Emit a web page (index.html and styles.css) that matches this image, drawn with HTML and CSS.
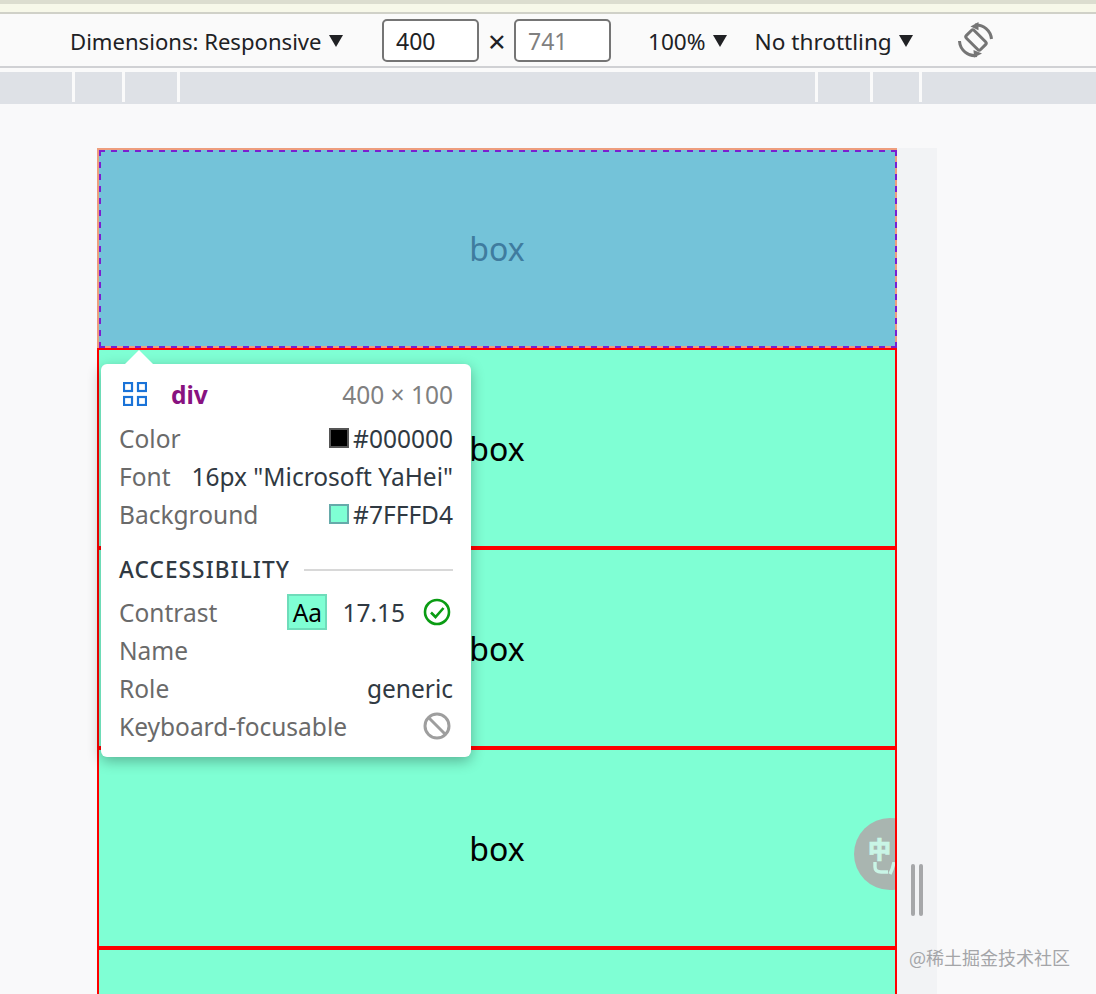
FILE: index.html
```html
<!DOCTYPE html>
<html lang="en">
<head>
<meta charset="utf-8">
<title>Responsive device toolbar</title>
<link rel="stylesheet" href="styles.css">
</head>
<body>
<div class="strip"></div>
<header class="toolbar">
  <span class="tb-label dims">Dimensions: Responsive</span><i class="caret caret-dims"></i>
  <div class="field">400</div>
  <span class="times">×</span>
  <div class="field muted">741</div>
  <span class="tb-label zoom">100%</span><i class="caret caret-zoom"></i>
  <span class="tb-label throttle">No throttling</span><i class="caret caret-throttle"></i>
  <svg class="rotate" width="36" height="38" viewBox="0 0 36 38" fill="none" stroke="#757575">
    <rect x="12.5" y="9" width="11" height="20" rx="2" stroke-width="3" transform="rotate(-45 18 19)"/>
    <path d="M17 4 A15.5 15.5 0 0 1 33.5 18" stroke-width="3"/>
    <path d="M1.5 20 A15.5 15.5 0 0 0 19 34.5" stroke-width="3"/>
    <path d="M12.5 5.5 L20.5 1 L20.5 9.2 Z" fill="#757575" stroke="none"/>
    <path d="M24 32.5 L15.5 29 L16 36.5 Z" fill="#757575" stroke="none"/>
  </svg>
</header>
<div class="ruler">
  <div class="seg s1"></div><div class="seg s2"></div><div class="seg s3"></div><div class="seg s4"></div><div class="seg s5"></div><div class="seg s6"></div><div class="seg s7"></div>
</div>
<main class="canvas">
  <div class="viewport">
    <div class="box hl">box</div>
    <div class="box">box</div>
    <div class="box">box</div>
    <div class="box">box
      <div class="ime"><span class="ime-zh">中</span>
        <svg class="ime-hook" width="24" height="13" viewBox="0 0 24 13" fill="none" stroke="#c9f5e6" stroke-width="3.4"><path d="M2 0 V5 Q2 10 8 10 H15"/><path d="M21 0 Q20 6 17 12"/></svg>
      </div>
    </div>
    <div class="box"></div>
  </div>
  <div class="gutter">
    <div class="handle"><i></i><i></i></div>
  </div>
  <div class="watermark">@稀土掘金技术社区</div>

  <div class="tip">
    <div class="row head">
      <svg class="grid-ic" width="24" height="24" viewBox="0 0 24 24" fill="none" stroke="#1a73d8" stroke-width="2.2">
        <rect x="1" y="1" width="8" height="8"/><rect x="15" y="1" width="8" height="8"/><rect x="1" y="15" width="8" height="8"/><rect x="15" y="15" width="8" height="8"/>
      </svg>
      <b class="tag">div</b>
      <span class="size">400 × 100</span>
    </div>
    <div class="row"><span class="k">Color</span><span class="v"><i class="sw sw-black"></i>#000000</span></div>
    <div class="row"><span class="k">Font</span><span class="v">16px "Microsoft YaHei"</span></div>
    <div class="row"><span class="k">Background</span><span class="v"><i class="sw sw-aqua"></i>#7FFFD4</span></div>
    <div class="section"><span>ACCESSIBILITY</span><hr></div>
    <div class="row"><span class="k">Contrast</span><span class="v"><span class="aa">Aa</span><span class="ratio">17.15</span>
      <svg class="st" width="28" height="28" viewBox="0 0 28 28" fill="none" stroke="#0a9c13" stroke-width="2.6"><circle cx="14" cy="14" r="12"/><path d="M8 14.5 L12.5 19 L20.5 10"/></svg></span></div>
    <div class="row"><span class="k">Name</span></div>
    <div class="row"><span class="k">Role</span><span class="v">generic</span></div>
    <div class="row"><span class="k">Keyboard-focusable</span><span class="v">
      <svg class="st" width="28" height="28" viewBox="0 0 28 28" fill="none" stroke="#9e9e9e" stroke-width="3"><circle cx="14" cy="14" r="12"/><path d="M5.5 5.5 L22.5 22.5"/></svg></span></div>
  </div>
</main>
</body>
</html>
```
FILE: styles.css
```css
* { box-sizing: border-box; }
html, body { margin: 0; height: 100%; overflow: hidden; }
body {
  width: 1096px;
  height: 994px;
  display: flex;
  flex-direction: column;
  background: #f9f9fa;
  font-family: "Noto Sans", "Open Sans", sans-serif;
  font-size: 24px;
  color: #202124;
}
.strip {
  height: 14px;
  flex: none;
  background: #f7f8e9;
  border-top: 4px solid #dcddcf;
  border-bottom: 2px solid #d0d1c8;
}
.toolbar {
  height: 54px;
  flex: none;
  display: flex;
  align-items: center;
  padding-left: 70px;
  background: #fafafa;
  border-bottom: 2px solid #d0d1d4;
}
.tb-label { padding-top: 2px; white-space: nowrap; font-size: 22.6px; }
.tb-label.dims { width: 252px; font-size: 22.1px; }
.caret {
  width: 0;
  height: 0;
  flex: none;
  margin-top: 2px;
  border-left: 7.5px solid transparent;
  border-right: 7.5px solid transparent;
  border-top: 12px solid #202124;
}
.caret-dims { margin-left: 7px; }
.caret-zoom { margin-left: 7px; }
.caret-throttle { margin-left: 7px; }
.field {
  width: 97px;
  height: 43px;
  margin-left: 39px;
  padding-left: 12px;
  border: 2px solid #757575;
  border-radius: 5px;
  background: #fff;
  font-size: 23px;
  line-height: 41px;
}
.field.muted { margin-left: 9px; color: #808080; }
.times { width: 17px; margin-left: 9px; padding-top: 3px; font-size: 31px; line-height: 1; text-align: center; }
.zoom { margin-left: 37px; }
.throttle { margin-left: 28px; }
.rotate { margin-left: 45px; flex: none; }
.ruler {
  height: 36px;
  flex: none;
  display: flex;
  gap: 3px;
  padding-top: 4px;
  background: #fafafa;
  border-bottom: 2px solid #dee1e6;
}
.seg { height: 30px; flex: none; background: #dee1e6; }
.s1 { width: 72px; }
.s2 { width: 47px; }
.s3 { width: 52px; }
.s4 { width: 635px; }
.s5 { width: 52px; }
.s6 { width: 46px; }
.s7 { flex: 1; }
.canvas {
  flex: 1;
  position: relative;
  display: flex;
  align-items: flex-start;
  padding: 44px 0 0 97px;
  overflow: hidden;
}
.viewport { width: 800px; flex: none; }
.box {
  position: relative;
  height: 200px;
  padding-top: 2px;
  display: flex;
  align-items: center;
  justify-content: center;
  background: #7fffd4;
  border: 2px solid #f00;
  color: #000;
  font-family: "Noto Sans", sans-serif;
  font-size: 32px;
  line-height: 1;
  overflow: hidden;
}
.box.hl {
  background: #74c3d9;
  border-color: #ee9e7e;
  color: #3f7c9f;
  overflow: visible;
}
.box.hl::after {
  content: "";
  position: absolute;
  inset: 0 -2px -2px 0;
  background:
    repeating-linear-gradient(90deg, #7b1fd0 0 6px, transparent 6px 12px) 0 0 / 100% 2px no-repeat,
    repeating-linear-gradient(90deg, #7b1fd0 0 6px, transparent 6px 12px) 0 100% / 100% 2px no-repeat,
    repeating-linear-gradient(180deg, #7b1fd0 0 6px, transparent 6px 12px) 0 0 / 2px 100% no-repeat,
    repeating-linear-gradient(180deg, #7b1fd0 0 6px, transparent 6px 12px) 100% 0 / 2px 100% no-repeat;
}
.ime {
  position: absolute;
  left: 755px;
  top: 68px;
  width: 72px;
  height: 72px;
  border-radius: 50%;
  background: #a9b5b0;
}
.ime-zh {
  position: absolute;
  left: 14px;
  top: 18px;
  font-family: "Noto Sans CJK SC", sans-serif;
  font-size: 23px;
  font-weight: 900;
  line-height: 24px;
  color: #c9f5e6;
  -webkit-text-stroke: .6px #c9f5e6;
}
.ime-hook { position: absolute; left: 19px; top: 44px; }
.gutter {
  width: 40px;
  flex: none;
  align-self: stretch;
  position: relative;
  background: #f2f3f5;
}
.handle {
  position: absolute;
  left: 14px;
  top: 716px;
  display: flex;
  gap: 4px;
}
.handle i {
  width: 4px;
  height: 52px;
  border-radius: 2px;
  background: #a6a7a9;
}
.watermark {
  position: absolute;
  left: 909px;
  top: 840px;
  font-family: "Noto Sans CJK SC", sans-serif;
  font-size: 18px;
  line-height: 26px;
  color: #a4a5a8;
  white-space: nowrap;
}
.tip {
  position: absolute;
  left: 101px;
  top: 260px;
  width: 370px;
  height: 393px;
  padding: 11px 18px 0;
  background: #fff;
  border-radius: 6px;
  box-shadow: 0 4px 14px rgba(0, 0, 0, .3);
  font-size: 24.5px;
  color: #303942;
}
.tip::before {
  content: "";
  position: absolute;
  left: 24px;
  top: -14px;
  border-left: 14px solid transparent;
  border-right: 14px solid transparent;
  border-bottom: 14px solid #fff;
}
.row {
  height: 38px;
  display: flex;
  align-items: center;
  justify-content: space-between;
  white-space: nowrap;
}
.row.head { margin-bottom: 6px; justify-content: flex-start; }
.k { color: #6a6a6a; }
.v { display: flex; align-items: center; }
.grid-ic { flex: none; margin-left: 4px; }
.tag { margin-left: 24px; color: #881280; font-weight: 700; }
.size { margin-left: auto; color: #808080; }
.sw { width: 20px; height: 20px; margin-right: 4px; border: 2px solid; }
.sw-black { background: #000; border-color: #555; }
.sw-aqua { background: #7fffd4; border-color: #6aa; }
.section {
  height: 47px;
  margin-top: 13px;
  display: flex;
  align-items: center;
  gap: 14px;
  font-size: 22.6px;
  font-weight: 500;
  letter-spacing: 1.1px;
  color: #303942;
}
.section hr { flex: 1; height: 2px; margin: 0; border: 0; background: #d8d8d8; }
.aa {
  width: 40px;
  height: 36px;
  margin-right: 15px;
  border: 2px solid #6fdcba;
  background: #7fffd4;
  color: #000;
  line-height: 34px;
  text-align: center;
}
.ratio { margin-right: 18px; }
.st { flex: none; margin-right: 2px; }
```
